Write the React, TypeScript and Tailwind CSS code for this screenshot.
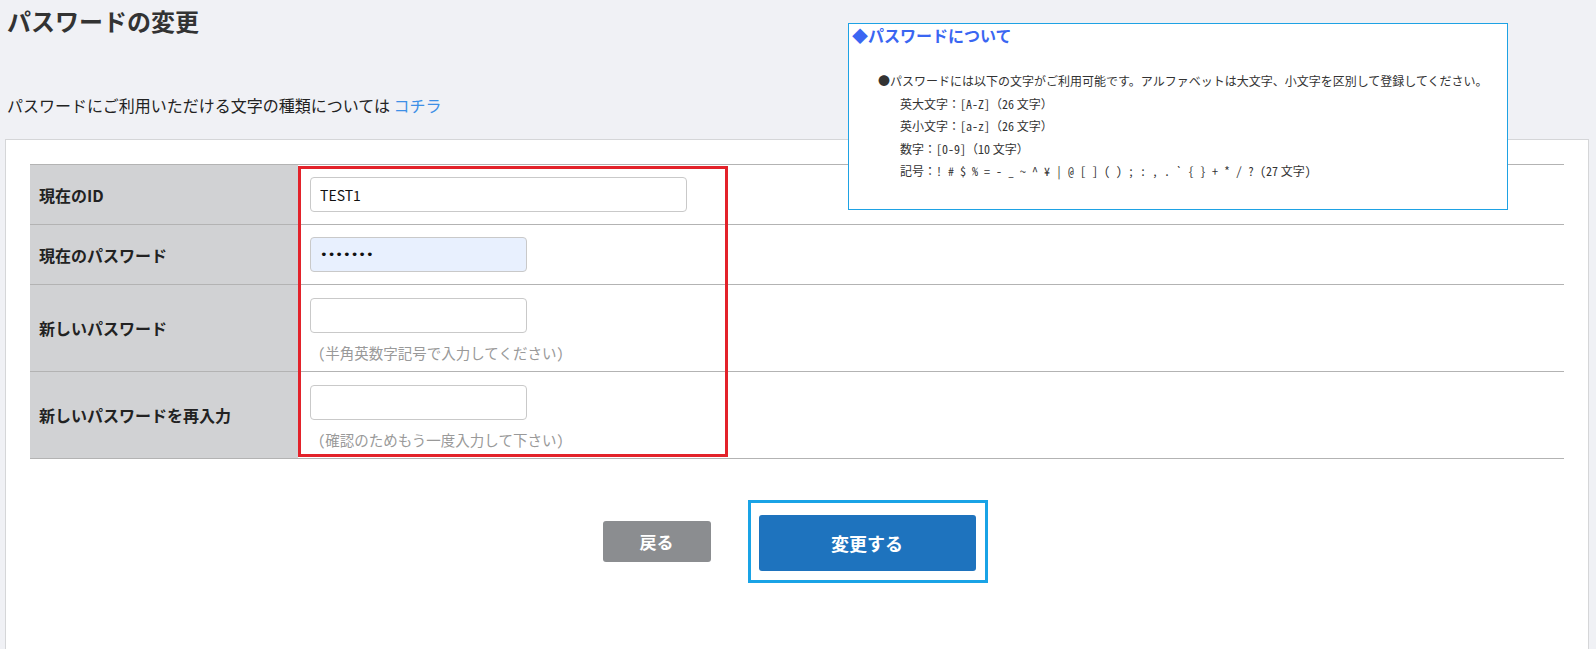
import React from "react";

const rowBorder = "border-b border-[#b3b3b3]";
const hw = "[font-feature-settings:'hwid']";

function Label({ children }: { children: React.ReactNode }) {
  return (
    <div className="w-[268px] shrink-0 bg-[#d1d2d4] flex items-center pl-[9px] text-[16px] font-bold text-[#222]">
      {children}
    </div>
  );
}

export default function App() {
  return (
    <div className="relative min-h-screen bg-[#f0f1f5] font-['Noto_Sans_CJK_JP','Noto_Sans',sans-serif] text-[#333] overflow-hidden">
      <h1 className="pl-[7px] pt-[5px] text-[24px] leading-[32px] font-bold text-[#333]">パスワードの変更</h1>
      <p className="mt-[56px] pl-[7px] text-[16px] leading-[24px] text-[#222]">
        パスワードにご利用いただける文字の種類については <span className="text-[#3d8fe6]">コチラ</span>
      </p>

      <div className="mt-[22px] ml-[5px] mr-[7px] bg-white border border-[#d5d6d8] p-6 pb-[120px]">
        <div className="border-t border-[#b3b3b3]">
          <div className={`flex h-[60px] ${rowBorder}`}>
            <Label>現在のID</Label>
            <div className="flex items-center pl-[12px]">
              <input
                readOnly
                defaultValue="TEST1"
                className="w-[377px] h-[35px] border border-[#c9c9c9] rounded-[4px] bg-white px-[9px] text-[14px] text-[#111] outline-none"
              />
            </div>
          </div>
          <div className={`flex h-[60px] ${rowBorder}`}>
            <Label>現在のパスワード</Label>
            <div className="flex items-center pl-[12px]">
              <input
                readOnly
                type="password"
                defaultValue="abcdefg"
                className="w-[217px] h-[35px] border border-[#c9c9c9] rounded-[4px] bg-[#e8f0fe] px-[9px] font-['DejaVu_Sans',sans-serif] text-[13px] text-[#111] outline-none"
              />
            </div>
          </div>
          <div className={`flex h-[87px] ${rowBorder}`}>
            <Label>新しいパスワード</Label>
            <div className="flex flex-col pl-[12px] pt-[13px]">
              <input
                readOnly
                className="w-[217px] h-[35px] border border-[#c9c9c9] rounded-[4px] bg-white px-[9px] text-[14px] outline-none"
              />
              <span className={`mt-[9px] pl-[8px] text-[14.5px] leading-[22px] text-[#999] whitespace-nowrap ${hw}`}>(半角英数字記号で入力してください)</span>
            </div>
          </div>
          <div className={`flex h-[87px] ${rowBorder}`}>
            <Label>新しいパスワードを再入力</Label>
            <div className="flex flex-col pl-[12px] pt-[13px]">
              <input
                readOnly
                className="w-[217px] h-[35px] border border-[#c9c9c9] rounded-[4px] bg-white px-[9px] text-[14px] outline-none"
              />
              <span className={`mt-[9px] pl-[8px] text-[14.5px] leading-[22px] text-[#999] whitespace-nowrap ${hw}`}>(確認のためもう一度入力して下さい)</span>
            </div>
          </div>
        </div>

        <div className="mt-[41px] flex justify-center items-center gap-[37px] pr-[4px]">
          <button className="w-[108px] h-[41px] rounded-[3px] bg-[#8b8d90] text-white text-[17px] font-bold">戻る</button>
          <div className="border-[3px] border-[#19a3e6] pl-2 pr-[9px] pt-[12px] pb-[9px]">
            <button className="w-[217px] h-[56px] rounded-[3px] bg-[#1e73be] text-white text-[18px] font-bold">変更する</button>
          </div>
        </div>
      </div>

      {/* red annotation */}
      <div className="absolute left-[298px] top-[166px] w-[430px] h-[291px] border-[3px] border-[#e3222a] pointer-events-none" />

      {/* info box */}
      <div className="absolute left-[848px] top-[23px] w-[660px] h-[187px] border border-[#1ea2e4] bg-white">
        <div className="pl-[3px] text-[16px] leading-[22px] font-bold text-[#3a66f2]">◆パスワードについて</div>
        <div className="mt-[24px] text-[12px] leading-[22.6px] text-[#333]">
          <div className="pl-[29px]">●パスワードには以下の文字がご利用可能です。アルファベットは大文字、小文字を区別して登録してください。</div>
          <div className="pl-[51px]">英大文字：<span className={hw}>[A-Z]</span>（<span className={hw}>26</span> 文字）</div>
          <div className="pl-[51px]">英小文字：<span className={hw}>[a-z]</span>（<span className={hw}>26</span> 文字）</div>
          <div className="pl-[51px]">数字：<span className={hw}>[0-9]</span>（<span className={hw}>10</span> 文字）</div>
          <div className="pl-[51px]">
            記号：<span className={hw}>! # $ % = - _ ~ ^ ¥ | @ [ ] ( ) ; : , . ` {"{"} {"}"} + * / ? (27</span> 文字<span className={hw}>)</span>
          </div>
        </div>
      </div>
    </div>
  );
}
